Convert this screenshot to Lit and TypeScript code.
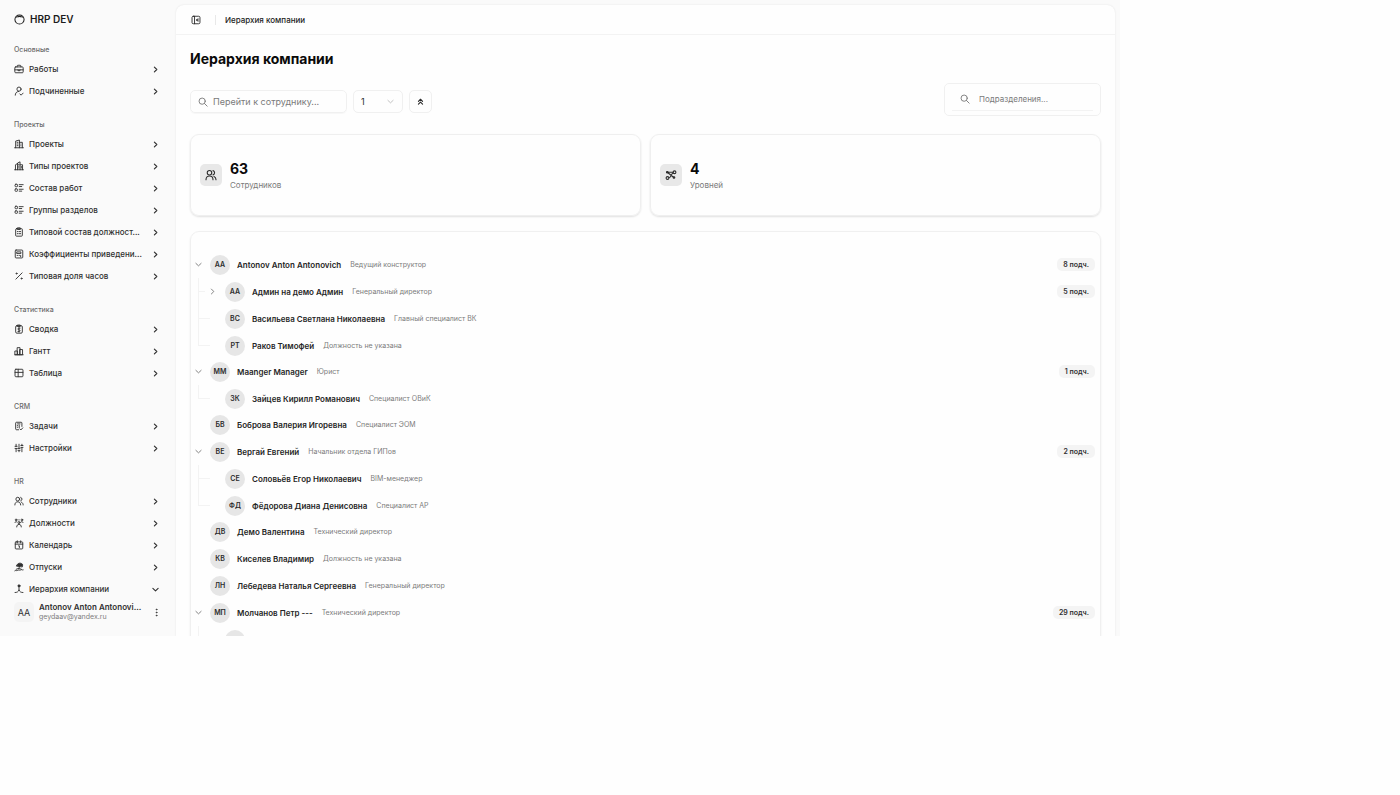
import { LitElement, html, svg, css, nothing, TemplateResult, SVGTemplateResult } from "lit";
import { customElement, property, state } from "lit/decorators.js";
import { classMap } from "lit/directives/class-map.js";

const glyphs: Record<string, SVGTemplateResult> = {
  logo: svg`<circle cx="12" cy="12" r="10"/><path d="M4.500 7C7 5 9 7 12 5c3 2 5 0 7.500 2"/>`,
  briefcase: svg`<rect x="2" y="7" width="20" height="14" rx="2"/><path d="M7.500 7V5a2 2 0 0 1 2-2h5a2 2 0 0 1 2 2v2M2 14h20M9.500 14v2h5v-2"/>`,
  userCheck: svg`<circle cx="12" cy="7.500" r="5"/><path d="M3 22c0-5 3-8.500 8-9M14 19l3 3 5-5"/>`,
  building: svg`<path d="M1.500 21h21M4 21V5l9-2.500V21M13 8h7v13M7.500 8h2M7.500 12h2M7.500 16h2M16.500 12v.5M16.500 16v.5"/>`,
  buildingAlt: svg`<path d="M1.500 21h21M3.500 21V9l5-3M8.500 21V5l6-3v19M14.500 9h6v12M11.500 8v1M11.500 12v1M11.500 16v1M17.500 13v4"/>`,
  listDetails: svg`<rect x="2.500" y="3" width="6" height="6" rx="2"/><rect x="2.500" y="14" width="6" height="6" rx="2"/><path d="M12.500 4H22M12.500 8.500h6M12.500 15H22M12.500 19.500h6"/>`,
  clipboard: svg`<rect x="4" y="4" width="16" height="18" rx="2"/><path d="M9 2h6v4H9zM8 11h2M13 11h3M8 16h2M13 16h3"/>`,
  calculator: svg`<rect x="3" y="2.500" width="18" height="19" rx="2"/><path d="M7.500 7h9v4h-9zM7.500 15.500h1M12 15.500h1M16 15.500v3"/>`,
  percent: svg`<path d="M19.500 4.500l-15 15"/><circle cx="6" cy="6" r="1.300"/><circle cx="18" cy="18" r="1.300"/>`,
  report: svg`<rect x="4" y="4" width="16" height="18" rx="3"/><path d="M9 2.500h6V6H9zM14.500 10h-3a1.500 1.500 0 0 0 0 4h1a1.500 1.500 0 0 1 0 4h-3M12 8.500v11"/>`,
  chart: svg`<path d="M2 21h20M3 12h5.500v9H3zM8.500 4h6v17h-6zM14.500 8.500h6V21h-6z"/>`,
  table: svg`<rect x="2.500" y="3" width="19" height="18" rx="2"/><path d="M2.500 10.500h19M10 3v18"/>`,
  tasks: svg`<path d="M11 21H6a2 2 0 0 1-2-2V5a2 2 0 0 1 2-2h11a2 2 0 0 1 2 2v8M8.500 7h6M8 11h.5M8 15h.5M12.500 10v6M14 19l2.500 2.500 4.500-5"/>`,
  sliders: svg`<path d="M5 3v5M5 13v8M12 3v10M12 18v3M19 3v3M19 11v10M2.500 13h5M2.500 8h5M9.500 13h5M9.500 17.500h5M16.500 6h5M16.500 10.500h5"/>`,
  team: svg`<circle cx="9" cy="7.500" r="4.500"/><path d="M2 21.500c0-5 3-7.500 7-7.500s7 2.500 7 7.500M16 3.200a4.500 4.500 0 0 1 0 8.600M18 14.800c2.500 1.200 4 3.400 4 6.700"/>`,
  roles: svg`<circle cx="12" cy="11" r="2.500"/><circle cx="5" cy="4.500" r="2"/><circle cx="19" cy="4.500" r="2"/><path d="M6.500 21.500c0-4 2-6 5.500-6s5.500 2 5.500 6M2 11c.5-1.500 2-2 4.500-2M22 11c-.5-1.500-2-2-4.500-2M12 4v1"/>`,
  calendar: svg`<rect x="3" y="4.500" width="18" height="17" rx="2"/><path d="M8 2v5M16 2v5M3 10h18M11 14h2v4"/>`,
  vacation: svg`<path fill="currentColor" d="M6 9C8 2.500 15 1 20 5c1 1.500 1 3 0 6z"/><path d="M14 9.500l-3 7M2 21c3-2 4 1 7-1s5 1 7-1 3 1 6 0M5 17.500c3-2.500 9-2.500 13 0"/>`,
  hierarchy: svg`<circle fill="currentColor" cx="12" cy="4.500" r="2.500"/><path d="M12 6.500V14M2.500 20.500c5 0 8-2 9.500-6.500 1.500 4.500 4.500 6.500 9.500 6.500"/>`,
  nodes: svg`<circle cx="5" cy="18" r="2.800"/><circle cx="19" cy="6.500" r="2.800"/><circle fill="currentColor" cx="4.500" cy="6.500" r="1.600"/><circle fill="currentColor" cx="18" cy="17" r="1.600"/><path d="M6 6.500h10M6.500 8l10 8M8 17.500c5 0 3-8 8.500-9.500"/>`,
  right: svg`<path d="M9 5.500l6.500 6.500L9 18.500"/>`,
  down: svg`<path d="M5 9l7 6.500L19 9"/>`,
  collapse: svg`<path d="M6.500 11.500l5.500-5.500 5.500 5.500M6.500 19l5.500-5.500 5.500 5.500"/>`,
  search: svg`<circle cx="10" cy="10" r="7.500"/><path d="M15.500 15.500L22 22"/>`,
  sidebar: svg`<rect x="2.500" y="3" width="19" height="18" rx="3"/><path d="M8.500 3v18M17 9l-4 3 4 3M13 12h5"/>`,
  dots: svg`<circle cx="12" cy="4" r="1.200"/><circle cx="12" cy="12" r="1.200"/><circle cx="12" cy="20" r="1.200"/>`,
};

const icon = (name: string, size = 10, weight = 2.2) =>
  html`<svg width=${size} height=${size} viewBox="0 0 24 24" fill="none" stroke="currentColor"
    stroke-width=${weight} stroke-linecap="round" stroke-linejoin="round" aria-hidden="true">${glyphs[name]}</svg>`;

const base = css`
  * { box-sizing: border-box; }
  svg { display: block; flex: none; }
  button, input, select { font: inherit; color: inherit; margin: 0; }
  button { border: 0; padding: 0; background: none; }
  ul { list-style: none; margin: 0; padding: 0; }
`;

const sections: { label: string; items: [string, string][] }[] = [
  { label: "Основные", items: [["briefcase", "Работы"], ["userCheck", "Подчиненные"]] },
  {
    label: "Проекты",
    items: [
      ["building", "Проекты"],
      ["buildingAlt", "Типы проектов"],
      ["listDetails", "Состав работ"],
      ["listDetails", "Группы разделов"],
      ["clipboard", "Типовой состав должност..."],
      ["calculator", "Коэффициенты приведени..."],
      ["percent", "Типовая доля часов"],
    ],
  },
  { label: "Статистика", items: [["report", "Сводка"], ["chart", "Гантт"], ["table", "Таблица"]] },
  { label: "CRM", items: [["tasks", "Задачи"], ["sliders", "Настройки"]] },
  {
    label: "HR",
    items: [
      ["team", "Сотрудники"],
      ["roles", "Должности"],
      ["calendar", "Календарь"],
      ["vacation", "Отпуски"],
      ["hierarchy", "Иерархия компании"],
    ],
  },
];

@customElement("app-sidebar")
export class AppSidebar extends LitElement {
  @property() current = "";

  static styles = [base, css`
    :host { display: flex; flex-direction: column; min-height: 0; color: #303030; }
    .brand { display: flex; align-items: center; gap: 5px; padding: 12px 14px 0; font-size: 10px; line-height: 14px; font-weight: 600; color: #1c1c1c; }
    nav { flex: 1; min-height: 0; overflow: hidden; padding: 17px 10px 0; }
    .group { margin-bottom: 16px; }
    h2 { margin: 0; padding: 0 4px; height: 15px; font-size: 7px; line-height: 14px; font-weight: 500; color: #6b6b6b; }
    .link { display: flex; align-items: center; gap: 5px; height: 22px; padding: 0 6px 0 4px; color: inherit; text-decoration: none; font-size: 8px; font-weight: 500; }
    .text { flex: 1; white-space: nowrap; line-height: 14px; }
    footer { flex: none; display: flex; align-items: center; gap: 5px; padding: 9px 15px 14px 14px; }
    .avatar { flex: none; width: 20px; height: 20px; border-radius: 5px; background: #f4f4f4; display: grid; place-items: center; font-size: 9px; }
    .who { flex: 1; line-height: 10px; white-space: nowrap; }
    .name { font-size: 8px; font-weight: 600; }
    .mail { font-size: 7px; color: #7d7d7d; }
  `];

  render() {
    return html`
      <div class="brand">${icon("logo", 11)}<span>HRP DEV</span></div>
      <nav aria-label="Разделы">
        ${sections.map((s) => html`
          <section class="group">
            <h2>${s.label}</h2>
            <ul>
              ${s.items.map(([glyph, text]) => html`
                <li><a class="link" href="#">
                  ${icon(glyph)}<span class="text">${text}</span>
                  ${icon(text === this.current ? "down" : "right", 9, 3)}
                </a></li>`)}
            </ul>
          </section>`)}
      </nav>
      <footer>
        <span class="avatar">AA</span>
        <div class="who">
          <div class="name">Antonov Anton Antonovi...</div>
          <div class="mail">geydaav@yandex.ru</div>
        </div>
        <button aria-label="Меню пользователя">${icon("dots", 9)}</button>
      </footer>`;
  }
}

interface Person {
  initials: string;
  name: string;
  role: string;
  count?: number;
  open?: boolean;
  children?: Person[];
}

const leaf = (initials: string, name: string, role: string): Person => ({ initials, name, role });

const people: Person[] = [
  {
    initials: "AA", name: "Antonov Anton Antonovich", role: "Ведущий конструктор", count: 8, open: true,
    children: [
      { initials: "АА", name: "Админ на демо Админ", role: "Генеральный директор", count: 5 },
      leaf("ВС", "Васильева Светлана Николаевна", "Главный специалист ВК"),
      leaf("РТ", "Раков Тимофей", "Должность не указана"),
    ],
  },
  {
    initials: "MM", name: "Maanger Manager", role: "Юрист", count: 1, open: true,
    children: [leaf("ЗК", "Зайцев Кирилл Романович", "Специалист ОВиК")],
  },
  leaf("БВ", "Боброва Валерия Игоревна", "Специалист ЭОМ"),
  {
    initials: "ВЕ", name: "Вергай Евгений", role: "Начальник отдела ГИПов", count: 2, open: true,
    children: [
      leaf("СЕ", "Соловьёв Егор Николаевич", "BIM-менеджер"),
      leaf("ФД", "Фёдорова Диана Денисовна", "Специалист АР"),
    ],
  },
  leaf("ДВ", "Демо Валентина", "Технический директор"),
  leaf("КВ", "Киселев Владимир", "Должность не указана"),
  leaf("ЛН", "Лебедева Наталья Сергеевна", "Генеральный директор"),
  {
    initials: "МП", name: "Молчанов Петр ---", role: "Технический директор", count: 29, open: true,
    children: [leaf("", "", "")],
  },
];

@customElement("people-tree")
export class PeopleTree extends LitElement {
  @property({ attribute: false }) people: Person[] = [];
  @state() private closed = new Set<string>();

  static styles = [base, css`
    :host { display: block; border: 1px solid #f0f0f0; border-radius: 9px; padding: 19px 5px 19px 0; box-shadow: 0 1px 2px rgba(0, 0, 0, 0.08); }
    .row { display: flex; align-items: center; height: 27px; }
    .nested { margin-bottom: -1px; }
    .toggle { flex: none; width: 14px; height: 14px; display: grid; place-items: center; color: #6a6a6a; }
    .guide { flex: none; align-self: stretch; display: flex; flex-direction: column; width: 7px; margin-left: 7px; }
    .guide.leaf { width: 12px; margin-right: 9px; }
    .elbow { height: 14px; border-left: 1px solid #f3f3f3; border-bottom: 1px solid #f3f3f3; }
    .stem { flex: 1; border-left: 1px solid #f3f3f3; }
    .last .stem { border-color: transparent; }
    .avatar { flex: none; width: 20px; height: 20px; margin: 0 7px 0 5px; border-radius: 50%; background: #e6e6e6; display: grid; place-items: center; font-size: 7px; font-weight: 600; color: #2c2c2c; }
    .nested .avatar { margin-left: 6px; }
    .name { font-size: 8px; line-height: 14px; font-weight: 600; color: #262626; white-space: nowrap; }
    .role { margin-left: 9px; font-size: 7px; line-height: 14px; color: #7c7c7c; white-space: nowrap; }
    .count { margin-left: auto; padding: 0 6px; border-radius: 5px; background: #f4f4f4; font-size: 7px; line-height: 13px; font-weight: 600; color: #303030; }
  `];

  private flip(name: string) {
    const next = new Set(this.closed);
    next.has(name) ? next.delete(name) : next.add(name);
    this.closed = next;
  }

  private row(p: Person, nested: boolean, last: boolean): TemplateResult {
    const open = !!p.open && !this.closed.has(p.name);
    return html`
      <li>
        <div class="row">
          ${nested ? html`<span class=${classMap({ guide: true, leaf: !p.count, last })}>
            <span class="elbow"></span><span class="stem"></span></span>` : nothing}
          ${p.count
            ? html`<button class="toggle" aria-label="Развернуть или свернуть" aria-expanded=${open}
                @click=${() => this.flip(p.name)}>${icon(open ? "down" : "right", 9)}</button>`
            : nested ? nothing : html`<span class="toggle"></span>`}
          <span class="avatar">${p.initials}</span>
          <span class="name">${p.name}</span>
          <span class="role">${p.role}</span>
          ${p.count ? html`<span class="count">${p.count} подч.</span>` : nothing}
        </div>
        ${open && p.children ? html`<ul class="nested">
          ${p.children.map((c, i) => this.row(c, true, i === p.children!.length - 1))}</ul>` : nothing}
      </li>`;
  }

  render() {
    return html`<ul>${this.people.map((p) => this.row(p, false, false))}</ul>`;
  }
}

@customElement("app-root")
export class AppRoot extends LitElement {
  static styles = [base, css`
    :host { display: block; min-height: 100vh; background: #fefefe; font-family: Inter, "Noto Sans", sans-serif; font-size: 9px; color: #2c2c2c; }
    .shell { display: grid; grid-template-columns: 176px minmax(0, 1fr); width: 80vw; height: 80vh; overflow: hidden; background: #fafafa; }
    main { min-height: 0; margin: 5px 5px 0 0; overflow: hidden; border-radius: 8px 8px 0 0; background: #fefefe; box-shadow: 0 0 2px rgba(0, 0, 0, 0.1); }
    .top { display: flex; align-items: center; height: 30px; padding: 0 15px; border-bottom: 1px solid #f3f3f3; }
    .divider { width: 1px; height: 10px; margin: 0 9px 0 14px; background: #e8e8e8; }
    .crumb { font-size: 8px; line-height: 14px; font-weight: 500; color: #1c1c1c; }
    .page { padding: 14px; }
    h1 { margin: 0; font-size: 14px; line-height: 20px; font-weight: 700; color: #0a0a0a; }
    .tools { display: flex; align-items: center; justify-content: space-between; margin-top: 14px; }
    .left { display: flex; gap: 6px; padding-top: 4px; }
    .field { display: flex; align-items: center; gap: 5px; width: 157px; height: 23px; padding: 0 7px; border: 1px solid #f0f0f0; border-radius: 5px; color: #7a7a7a; box-shadow: 0 1px 1px rgba(0, 0, 0, 0.03); }
    .input { flex: 1; min-width: 0; width: 100%; padding: 0; border: 0; outline: 0; background: none; line-height: 14px; }
    .input::placeholder { color: #7a7a7a; opacity: 1; }
    .level { position: relative; display: flex; align-items: center; }
    .select { width: 50px; height: 23px; padding: 0 7px; border: 1px solid #f0f0f0; border-radius: 5px; appearance: none; background: none; }
    .level svg { position: absolute; right: 8px; color: #b5b5b5; pointer-events: none; }
    .square { width: 23px; height: 23px; border: 1px solid #f0f0f0; border-radius: 5px; display: grid; place-items: center; }
    .units { width: 157px; height: 33px; padding: 4px 7px; border: 1px solid #f0f0f0; border-radius: 5px; font-size: 8px; }
    .unit { display: flex; align-items: center; gap: 9px; height: 23px; padding: 0 8px; border-bottom: 1px solid #f3f3f3; color: #7a7a7a; }
    .stats { display: grid; grid-template-columns: 1fr 1fr; gap: 9px; margin: 18px 0 15px; }
    .card { display: flex; align-items: center; gap: 8px; height: 82px; padding: 0 9px; border: 1px solid #efefef; border-radius: 9px; box-shadow: 0 1px 2px rgba(0, 0, 0, 0.12); }
    .tile { width: 22px; height: 22px; border-radius: 5px; background: #e8e8e8; display: grid; place-items: center; }
    .figures { padding-top: 2px; }
    .value { font-size: 14px; line-height: 18px; font-weight: 700; color: #0a0a0a; }
    .caption { font-size: 8px; line-height: 14px; color: #7a7a7a; }
  `];

  private stat(glyph: string, value: number, caption: string) {
    return html`<div class="card">
      <span class="tile">${icon(glyph, 12)}</span>
      <div class="figures"><div class="value">${value}</div><div class="caption">${caption}</div></div>
    </div>`;
  }

  render() {
    return html`
      <div class="shell">
        <app-sidebar current="Иерархия компании"></app-sidebar>
        <main>
          <header class="top">
            <button aria-label="Боковая панель">${icon("sidebar")}</button>
            <span class="divider"></span>
            <span class="crumb">Иерархия компании</span>
          </header>
          <div class="page">
            <h1>Иерархия компании</h1>
            <div class="tools">
              <div class="left">
                <label class="field">${icon("search")}
                  <input class="input" type="text" aria-label="Перейти к сотруднику" placeholder="Перейти к сотруднику..." />
                </label>
                <label class="level">
                  <select class="select" aria-label="Уровень">
                    <option>1</option><option>2</option><option>3</option><option>4</option>
                  </select>${icon("down", 9)}
                </label>
                <button class="square" aria-label="Свернуть все">${icon("collapse", 9, 3)}</button>
              </div>
              <div class="units">
                <label class="unit">${icon("search")}
                  <input class="input" type="text" aria-label="Подразделения" placeholder="Подразделения..." />
                </label>
              </div>
            </div>
            <div class="stats">
              ${this.stat("team", 63, "Сотрудников")}
              ${this.stat("nodes", 4, "Уровней")}
            </div>
            <people-tree .people=${people}></people-tree>
          </div>
        </main>
      </div>`;
  }
}
